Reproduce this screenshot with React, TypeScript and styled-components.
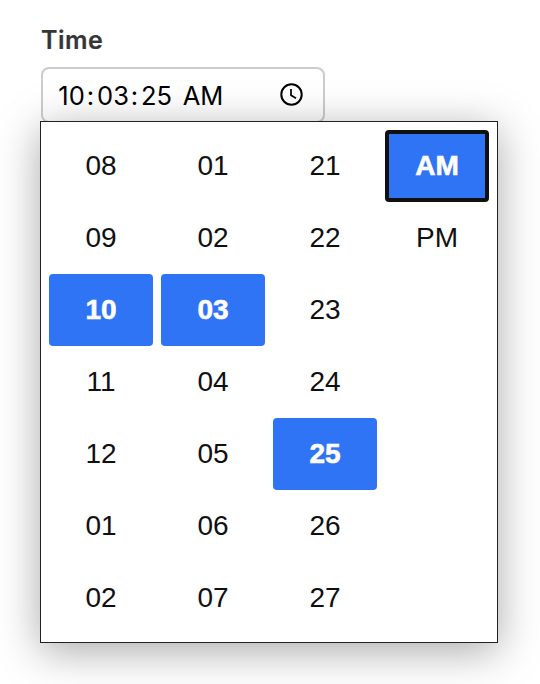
import React from 'react';
import styled, { createGlobalStyle } from 'styled-components';

const Global = createGlobalStyle`
  *{box-sizing:border-box}
  body{margin:0;background:#fff;overflow:hidden}
`;
const Page = styled.main`
  width:540px;height:684px;padding:24px 0 0 40px;overflow:hidden;
  background:#fff;color:#000;font-family:"Liberation Sans",Arial,sans-serif;
`;
const Label = styled.label`
  display:block;height:43px;padding-left:1px;
  font:600 25px/32px Inter,sans-serif;letter-spacing:.45px;color:#363636;
  -webkit-text-stroke:.2px #363636;
`;
const Field = styled.div`
  display:flex;align-items:center;justify-content:space-between;
  width:284px;height:56px;margin-left:1px;padding:0 20px 1px 14px;
  border:2px solid #ccc;border-radius:8px;font-family:Inter,sans-serif;font-size:25.5px;
`;
const Value = styled.div`display:flex;padding-top:2px;line-height:32px;`;
const Segment = styled.span<{$width:number}>`
  display:flex;justify-content:center;width:${p=>p.$width}px;white-space:nowrap;
`;
const Popup = styled.div`
  position:relative;display:grid;grid-template-columns:repeat(4,104px);gap:8px;
  width:458px;height:522px;margin-top:-2px;padding:8px;background:#fff;
  border:1px solid #222;box-shadow:0 8px 40px rgba(0,0,0,.34);
`;
const Column = styled.div`display:flex;flex-direction:column;`;
const Cell = styled.div<{$on?:boolean;$focus?:boolean}>`
  display:flex;align-items:center;justify-content:center;height:72px;padding-bottom:1px;
  font-size:28px;border-radius:4px;color:${p=>p.$on?'#fff':'#101010'};
  font-weight:${p=>p.$on?700:400};background:${p=>p.$on?'#3074f6':'transparent'};
  border:${p=>p.$focus?'4px solid #101010':'0'};
  -webkit-text-stroke:${p=>p.$on?'.6px #fff':'0'};
`;
const columns = [
  {items:['08','09','10','11','12','01','02'],on:'10'},
  {items:['01','02','03','04','05','06','07'],on:'03'},
  {items:['21','22','23','24','25','26','27'],on:'25'},
  {items:['AM','PM'],on:'AM'},
];
const segments:[string,number][] = [['10',29],[':',9],['03',36],[':',7],['25',37],['AM',56]];
export default function App(){
  return <><Global/><Page>
    <Label>Time</Label>
    <Field><Value>{segments.map(([text,width],i)=><Segment key={i} $width={width}>{text}</Segment>)}</Value>
      <svg width="24" height="24" viewBox="0 0 24 24" fill="none" stroke="#000"><circle cx="12.5" cy="11.5" r="10.2" strokeWidth="2"/><path d="M12 6v6.2l5 3" strokeWidth="1.7"/></svg>
    </Field>
    <Popup>{columns.map((c,i)=><Column key={i}>{c.items.map(t=><Cell key={t} $on={t===c.on} $focus={t==='AM'}>{t}</Cell>)}</Column>)}</Popup>
  </Page></>;
}
